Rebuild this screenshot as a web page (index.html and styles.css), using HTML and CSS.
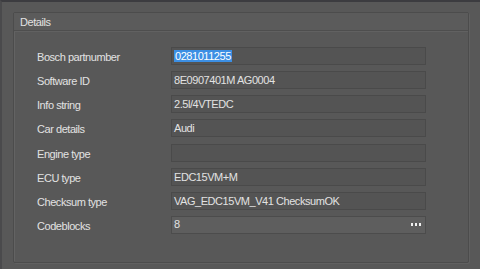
FILE: index.html
```html
<!DOCTYPE html>
<html lang="en">
<head>
    <meta charset="UTF-8">
    <meta name="viewport" content="width=device-width, initial-scale=1.0">
    <title>Details</title>
    <link rel="stylesheet" href="styles.css">
</head>
<body>
    <div class="window">
        <div class="group-box">
            <div class="group-title">Details</div>
            <div class="form">
                <label>Bosch partnumber</label>
                <div class="field"><span class="selected">0281011255</span></div>

                <label>Software ID</label>
                <div class="field">8E0907401M AG0004</div>

                <label>Info string</label>
                <div class="field">2.5l/4VTEDC</div>

                <label>Car details</label>
                <div class="field">Audi</div>

                <label>Engine type</label>
                <div class="field"></div>

                <label>ECU type</label>
                <div class="field">EDC15VM+M</div>

                <label>Checksum type</label>
                <div class="field">VAG_EDC15VM_V41 ChecksumOK</div>

                <label>Codeblocks</label>
                <div class="field button-edit">
                    <span>8</span>
                    <span class="dots"><i></i><i></i><i></i></span>
                </div>
            </div>
        </div>
    </div>
</body>
</html>
```

FILE: styles.css
```css
/* General styles */
body {
    margin: 0;
    padding: 0;
    background-color: #585858;
    font-family: "Liberation Sans", Arial, sans-serif;
    font-size: 11px;
    letter-spacing: -0.45px;
    color: #e2e2e2;
}

.window {
    height: 269px;
    box-sizing: border-box;
    border-top: 2px solid #3c3c40;
    border-left: 2px solid #4a4a4c;
    padding: 10px 11px 6px 11px;
}

.group-box {
    height: 100%;
    box-sizing: border-box;
    border: 1px solid #4c4c4c;
    box-shadow: inset 1px 1px 0 #636363, 1px 1px 0 #606060;
    border-radius: 2px;
}

.group-title {
    height: 17px;
    line-height: 18px;
    padding-left: 6px;
    border-bottom: 1px solid #4e4e4e;
    box-shadow: 0 1px 0 #616161;
    background-color: #5b5b5b;
}

.form {
    display: grid;
    grid-template-columns: 134px 255px;
    grid-auto-rows: 18px;
    row-gap: 6.15px;
    padding: 16px 0 0 23px;
}

.form label {
    line-height: 20px;
}

.field {
    height: 18px;
    box-sizing: border-box;
    line-height: 17px;
    padding: 0 2px;
    background-color: #545454;
    border: 1px solid #4a4a4a;
    white-space: nowrap;
}

.selected {
    background-color: #3c8fe4;
    color: #ffffff;
    padding: 0 1px;
}

.button-edit {
    display: flex;
    justify-content: space-between;
    align-items: center;
    background-color: #5e5e5e;
    border-color: #4c4c4c;
}

.dots {
    display: flex;
    gap: 2px;
    padding-right: 2px;
}

.dots i {
    width: 2px;
    height: 3px;
    background-color: #f0f0f0;
}
```
